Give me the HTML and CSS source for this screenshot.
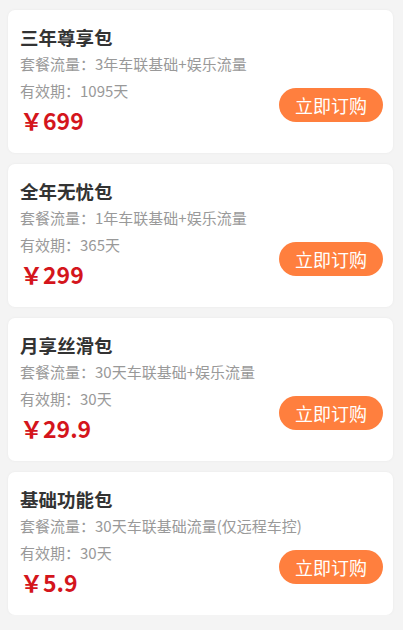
FILE: index.html
```html
<!DOCTYPE html>
<html lang="zh-CN">
<head>
<meta charset="utf-8">
<title>套餐</title>
<link rel="stylesheet" href="styles.css">
</head>
<body>
<div class="list">
  <div class="card">
    <div class="info">
      <div class="name">三年尊享包</div>
      <div class="meta">套餐流量：3年车联基础+娱乐流量</div>
      <div class="meta">有效期：1095天</div>
      <div class="price">￥699</div>
    </div>
    <button class="buy">立即订购</button>
  </div>
  <div class="card">
    <div class="info">
      <div class="name">全年无忧包</div>
      <div class="meta">套餐流量：1年车联基础+娱乐流量</div>
      <div class="meta">有效期：365天</div>
      <div class="price">￥299</div>
    </div>
    <button class="buy">立即订购</button>
  </div>
  <div class="card">
    <div class="info">
      <div class="name">月享丝滑包</div>
      <div class="meta">套餐流量：30天车联基础+娱乐流量</div>
      <div class="meta">有效期：30天</div>
      <div class="price">￥29.9</div>
    </div>
    <button class="buy">立即订购</button>
  </div>
  <div class="card">
    <div class="info">
      <div class="name">基础功能包</div>
      <div class="meta">套餐流量：30天车联基础流量(仅远程车控)</div>
      <div class="meta">有效期：30天</div>
      <div class="price">￥5.9</div>
    </div>
    <button class="buy">立即订购</button>
  </div>
</div>
</body>
</html>
```
FILE: styles.css
```css
html, body {
  margin: 0;
  padding: 0;
  background: #f4f4f4;
  font-family: "Noto Sans CJK SC", "Noto Sans", sans-serif;
}
.list {
  display: flex;
  flex-direction: column;
  gap: 11px;
  padding: 10px 10px 0 8px;
}
.card {
  display: flex;
  justify-content: space-between;
  background: #fff;
  border-radius: 7px;
  box-shadow: 0 0 3px rgba(0, 0, 0, 0.05);
  padding: 14px 10px 16px 12px;
  height: 143px;
  box-sizing: border-box;
}
.info {
  display: flex;
  flex-direction: column;
  flex: 1;
  min-width: 0;
  white-space: nowrap;
}
.name {
  font-size: 18.5px;
  font-weight: 700;
  color: #333;
  line-height: 26px;
}
.meta {
  font-size: 15px;
  color: #999;
  line-height: 27px;
}
.price {
  font-size: 23px;
  font-weight: 700;
  color: #d4151c;
  line-height: 32px;
}
.buy {
  flex-shrink: 0;
  align-self: flex-end;
  margin-bottom: 15px;
  width: 104px;
  height: 34px;
  border: none;
  border-radius: 17px;
  background: #ff7f3e;
  color: #fff;
  font-family: "Noto Sans CJK SC", sans-serif;
  font-size: 18px;
  padding: 0;
  line-height: 34px;
}
```
